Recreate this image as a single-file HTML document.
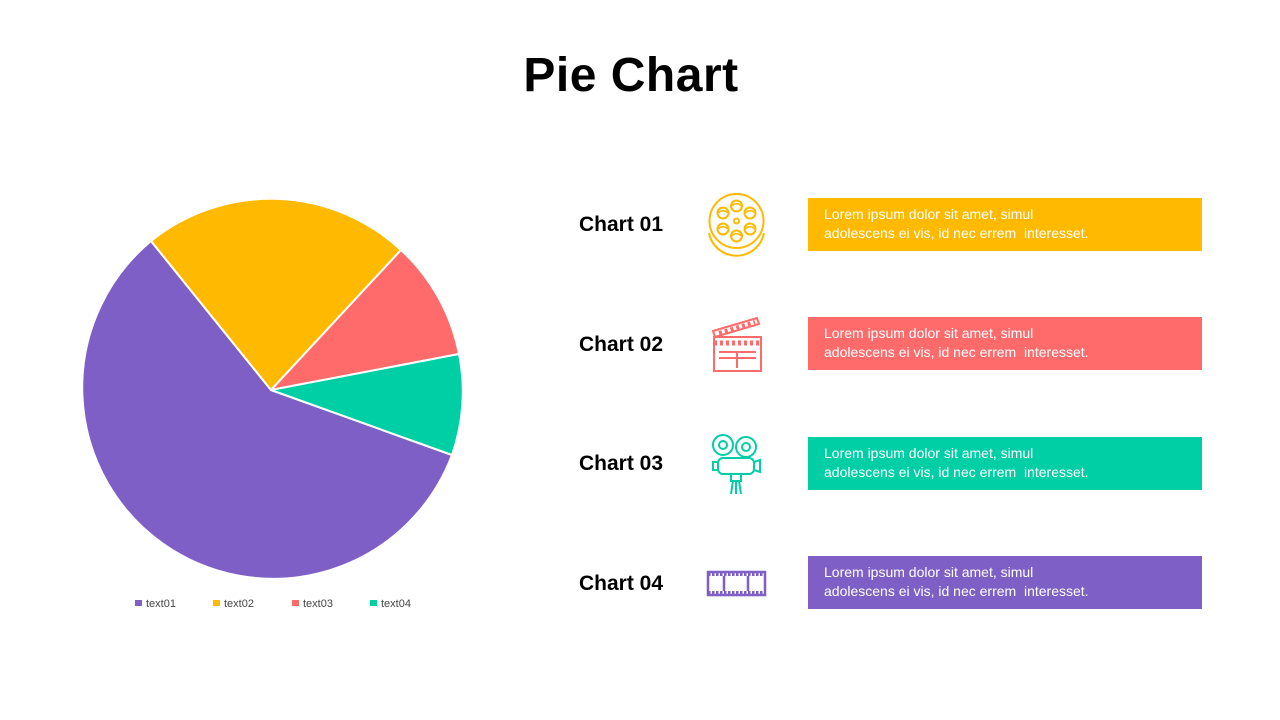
<!DOCTYPE html>
<html><head><style>
body{margin:0;width:1280px;height:720px;background:#fff;font-family:"Liberation Sans",sans-serif;position:relative;overflow:hidden}
h1{position:absolute;top:48px;left:-9px;width:1280px;text-align:center;margin:0;font-size:48px;font-weight:bold;color:#000;letter-spacing:0.5px}
.lab{position:absolute;left:579px;font-size:21px;font-weight:bold;color:#000}
.box{position:absolute;left:808px;width:394px;height:53px;color:#fff;font-size:14px;line-height:19px;padding:7px 16px;box-sizing:border-box}
.leg{position:absolute;top:598px;font-size:11px;color:#444}
.leg i{display:inline-block;width:7px;height:6px;margin-right:4px;vertical-align:1px}
</style></head><body>
<h1>Pie Chart</h1>
<svg style="position:absolute;left:0;top:0" width="600" height="720">
<g stroke="#fff" stroke-width="2" stroke-linejoin="round">
<path d="M271 390 L452 455 A191 191 0 1 1 151 241 Z" fill="#7e5fc6"/>
<path d="M271 390 L151 241 A191 191 0 0 1 401 250 Z" fill="#ffba00"/>
<path d="M271 390 L401 250 A191 191 0 0 1 459 354 Z" fill="#ff6b6b"/>
<path d="M271 390 L459 354 A191 191 0 0 1 452 455 Z" fill="#00cfa5"/>
</g></svg>
<div class="leg" style="left:135px"><i style="background:#7e5fc6"></i>text01</div>
<div class="leg" style="left:213px"><i style="background:#ffba00"></i>text02</div>
<div class="leg" style="left:292px"><i style="background:#ff6b6b"></i>text03</div>
<div class="leg" style="left:370px"><i style="background:#00cfa5"></i>text04</div>

<div class="lab" style="top:213px">Chart 01</div>
<div class="lab" style="top:333px">Chart 02</div>
<div class="lab" style="top:452px">Chart 03</div>
<div class="lab" style="top:572px">Chart 04</div>

<div class="box" style="top:198px;background:#ffba00">Lorem ipsum dolor sit amet, simul<br>adolescens ei vis, id nec errem &nbsp;interesset.</div>
<div class="box" style="top:317px;background:#ff6b6b">Lorem ipsum dolor sit amet, simul<br>adolescens ei vis, id nec errem &nbsp;interesset.</div>
<div class="box" style="top:437px;background:#00cfa5">Lorem ipsum dolor sit amet, simul<br>adolescens ei vis, id nec errem &nbsp;interesset.</div>
<div class="box" style="top:556px;background:#7e5fc6">Lorem ipsum dolor sit amet, simul<br>adolescens ei vis, id nec errem &nbsp;interesset.</div>

<svg style="position:absolute;left:700px;top:185px" width="80" height="420" fill="none" stroke-width="2">
<g stroke="#ffba00">
<circle cx="36.5" cy="36" r="27"/>
<path d="M9 48 A28 28 0 0 0 64 48"/>
<circle cx="36.5" cy="36" r="2.5"/>
<circle cx="36.5" cy="21" r="5.5"/><circle cx="36.5" cy="51" r="5.5"/>
<circle cx="23" cy="28" r="5.5"/><circle cx="50" cy="28" r="5.5"/>
<circle cx="23" cy="44" r="5.5"/><circle cx="50" cy="44" r="5.5"/>
<path d="M32 21 A5 4 0 0 1 41 21 M32 51 A5 4 0 0 1 41 51 M18.5 28 A5 4 0 0 1 27.5 28 M45.5 28 A5 4 0 0 1 54.5 28 M18.5 44 A5 4 0 0 1 27.5 44 M45.5 44 A5 4 0 0 1 54.5 44" stroke-width="1.5"/>
</g>
<g stroke="#ff6b6b">
<rect x="14" y="152" width="47" height="34"/>
<line x1="14" y1="158" x2="61" y2="158" stroke-width="5" stroke-dasharray="3 3"/>
<path d="M13 146 L57 133 L59 139 L15 152 Z"/>
<path d="M19 148 L55 137" stroke-width="4" stroke-dasharray="3 3"/>
<path d="M19 167 H56 M19 173 H56 M37 167 V183"/>
</g>
<g stroke="#00cfa5">
<circle cx="23" cy="260" r="10"/><circle cx="23" cy="260" r="4"/>
<circle cx="46" cy="262" r="10"/><circle cx="46" cy="262" r="4"/>
<rect x="18" y="273" width="36" height="16" rx="5"/>
<path d="M18 277 H13 V285 H18 M54 277 L60 275 V287 L54 285"/>
<path d="M31 289 V296 H41 V289 M33 296 L31 309 M36 296 V309 M39 296 L41 309"/>
</g>
<g stroke="#7e5fc6" stroke-width="2.5">
<rect x="8" y="387" width="57" height="23"/>
<line x1="8" y1="389" x2="65" y2="389" stroke-width="4" stroke-dasharray="2.5 1.5"/>
<line x1="8" y1="408" x2="65" y2="408" stroke-width="4" stroke-dasharray="2.5 1.5"/>
<path d="M24 391 V406 M48 391 V406"/>
</g>
</svg>
</body></html>
